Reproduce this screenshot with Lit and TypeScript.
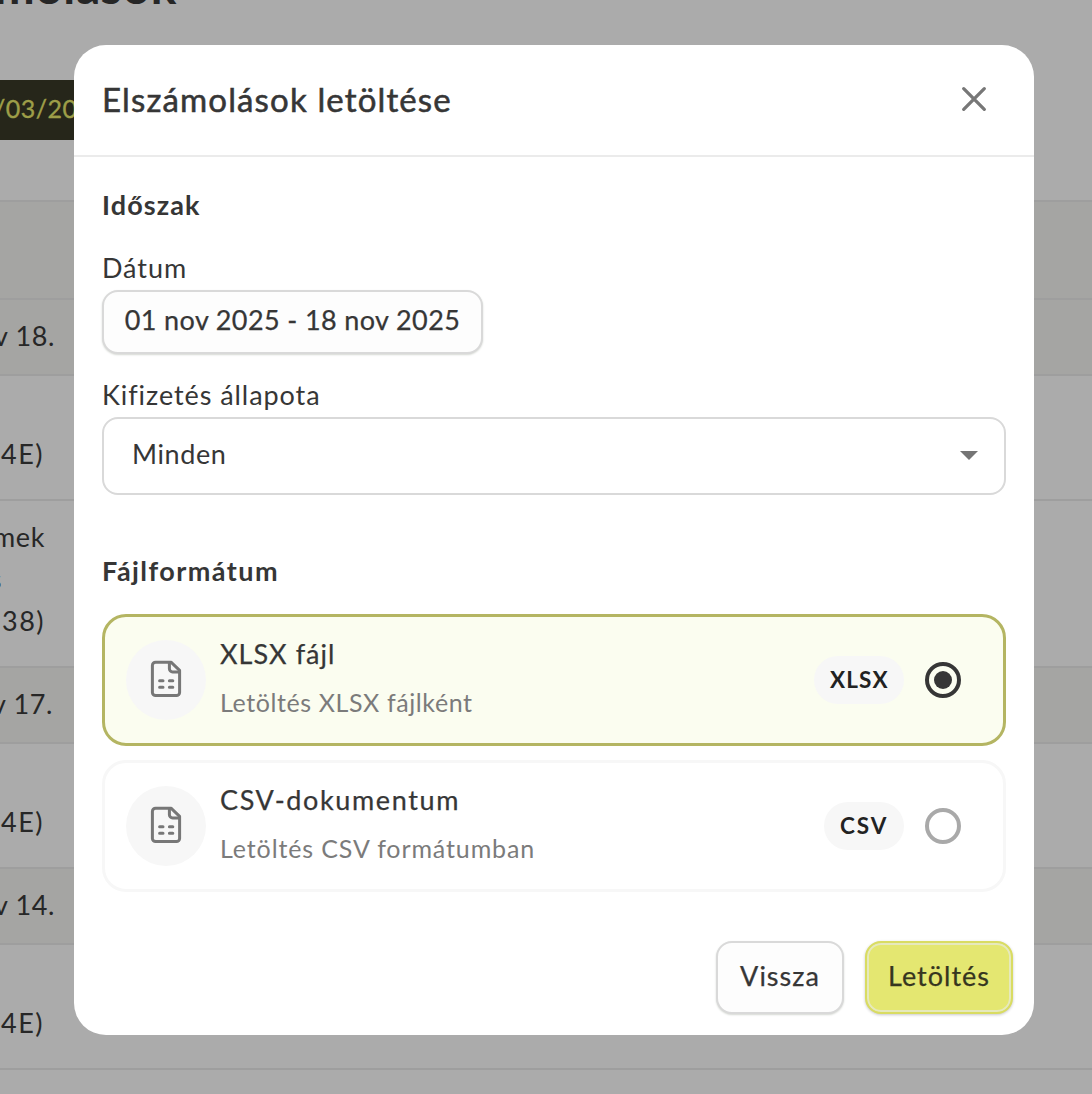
import { LitElement, html, css, svg } from "lit";
import { customElement, property } from "lit/decorators.js";

interface Line { text: string; right: number; wide?: boolean; }
interface Row { height: number; shaded?: boolean; lines: Line[]; }

const ROWS: Row[] = [
  { height: 98, shaded: true, lines: [] },
  { height: 76, shaded: true, lines: [{ text: "nov 18.", right: 55 }] },
  { height: 125, lines: [{ text: "", right: 0 }, { text: "4E)", right: 44, wide: true }] },
  { height: 167, lines: [{ text: "termek", right: 45 }, { text: "és", right: 2 }, { text: "38)", right: 45, wide: true }] },
  { height: 76, shaded: true, lines: [{ text: "nov 17.", right: 53 }] },
  { height: 125, lines: [{ text: "", right: 0 }, { text: "4E)", right: 44, wide: true }] },
  { height: 76, shaded: true, lines: [{ text: "nov 14.", right: 55 }] },
  { height: 125, lines: [{ text: "", right: 0 }, { text: "4E)", right: 44, wide: true }] },
  { height: 26, lines: [] },
];

@customElement("statement-page")
export class StatementPage extends LitElement {
  static styles = css`
    :host { display: block; height: 1094px; overflow: hidden; background: #ababab; color: #272727; }
    .top { height: 80px; overflow: hidden; }
    .heading { width: 177px; margin-top: -44px; display: flex; justify-content: flex-end;
      font-size: 48px; line-height: 60px; font-weight: 700; color: #262626; letter-spacing: 0.6px; }
    .band { height: 60px; width: 300px; background: #26261a; color: #9d9e48; display: flex; align-items: center; overflow: hidden; }
    .range { font-size: 25px; line-height: 30px; letter-spacing: 0.5px; -webkit-text-stroke: 0.35px currentColor; margin: -5px 0 0 -6px; white-space: nowrap; }
    .gap { height: 60px; }
    .row { box-sizing: border-box; border-top: 2px solid #9e9e9e; padding-top: 15px; overflow: hidden; }
    .shaded { background: #a5a5a3; }
    .line { height: 42px; line-height: 42px; font-size: 27px; display: flex; justify-content: flex-end; white-space: nowrap; letter-spacing: 0.6px; }
    .wide { letter-spacing: 1.5px; }
  `;
  render() {
    return html`
      <div class="top"><div class="heading">Elszámolások</div></div>
      <div class="band"><div class="range">/03/20</div></div>
      <div class="gap"></div>
      ${ROWS.map((r) => html`
        <div class="row ${r.shaded ? "shaded" : ""}" style="height:${r.height}px">
          ${r.lines.map((l) => html`<div class="line ${l.wide ? "wide" : ""}" style="width:${l.right}px">${l.text}</div>`)}
        </div>`)}
    `;
  }
}

@customElement("format-option")
export class FormatOption extends LitElement {
  @property() name = "";
  @property() detail = "";
  @property() badge = "";
  @property({ type: Boolean, reflect: true }) selected = false;
  static styles = css`
    :host { box-sizing: border-box; display: flex; align-items: center; height: 132px; padding: 0 42px 0 21px;
      border: 3px solid #f7f7f7; border-radius: 24px; background: #fff; }
    :host([selected]) { border-color: #b4b562; background: #fbfdf0; }
    .disc { width: 80px; height: 80px; border-radius: 50%; background: #f7f7f7; display: grid; place-items: center; }
    .disc svg { width: 40px; height: 40px; display: block; }
    .texts { flex: 1; padding: 0 0 4px 14px; }
    .name { font-size: 27px; line-height: 48px; -webkit-text-stroke: 0.25px currentColor; color: #363636; letter-spacing: var(--name-spacing); }
    .detail { font-size: 25px; line-height: 49px; color: #7b7b7b; letter-spacing: var(--detail-spacing); }
    .badge { box-sizing: border-box; width: var(--badge-width); height: 48px; border-radius: 24px; padding-left: 16px; background: #f7f7f7; font-size: 22.5px; line-height: 47px; font-weight: 700; color: #222; letter-spacing: var(--badge-spacing); white-space: nowrap; }
    .radio { box-sizing: border-box; width: 36px; height: 36px; margin-left: 21px; border: 4px solid #a9a9a9; border-radius: 50%; display: grid; place-items: center; }
    :host([selected]) .radio { border-color: #363636; }
    .dot { width: 18px; height: 18px; border-radius: 50%; background: #363636; }
  `;
  render() {
    return html`
      <div class="disc">
        <svg viewBox="0 0 40 40" fill="none" stroke="#777" stroke-width="3" stroke-linecap="round" stroke-linejoin="round">
          ${svg`<path d="M25 2.2H9.6a3.2 3.2 0 0 0-3.2 3.2v27a3.2 3.2 0 0 0 3.2 3.2h20.8a3.2 3.2 0 0 0 3.2-3.2V10.4Z"/>
          <path d="M23.4 2.4v6.4a3.2 3.2 0 0 0 3.2 3.2h6.6"/>
          <path d="M13.6 20.7h3.4M23.4 20.7h3.4M13.6 27.3h3.4M23.4 27.3h3.4"/>`}
        </svg>
      </div>
      <div class="texts">
        <div class="name">${this.name}</div>
        <div class="detail">${this.detail}</div>
      </div>
      <div class="badge">${this.badge}</div>
      <div class="radio">${this.selected ? html`<div class="dot"></div>` : ""}</div>
    `;
  }
}

@customElement("app-root")
export class AppRoot extends LitElement {
  static styles = css`
    :host { display: block; position: relative; width: 1092px; height: 1094px; overflow: hidden; font-family: Lato, "Liberation Sans", sans-serif; }
    .modal { position: absolute; left: 74px; top: 45px; width: 960px; height: 990px; box-sizing: border-box; border-radius: 32px; background: #fff; color: #363636;
      display: flex; flex-direction: column; overflow: hidden; }
    .head { height: 110px; flex: none; border-bottom: 2px solid #ebebeb; padding: 0 44px 0 28px; display: flex; align-items: center; justify-content: space-between; }
    .title { font-size: 33px; line-height: 40px; margin-top: -2px; -webkit-text-stroke: 0.55px currentColor; letter-spacing: 1.14px; }
    .close { width: 32px; height: 32px; display: block; }
    .body { flex: 1; padding: 0 28px; display: flex; flex-direction: column; }
    .section { font-size: 27px; line-height: 34px; font-weight: 700; margin-top: 31px; letter-spacing: 1.1px; }
    .label { font-size: 27px; line-height: 34px; letter-spacing: 0.93px; }
    .label.date { margin-top: 29px; }
    .label.state { margin-top: 24px; }
    .picker { box-sizing: border-box; align-self: flex-start; width: 381px; height: 64px; margin-top: 5px; border: 2px solid #d9d9d9; border-radius: 16px; background: #fdfdfd;
      box-shadow: 0 1px 2px #d5d8d3; display: flex; justify-content: center; font-size: 27px; line-height: 55px; letter-spacing: 0.38px; -webkit-text-stroke: 0.25px currentColor; white-space: nowrap; }
    .select { box-sizing: border-box; height: 78px; margin-top: 5px; border: 2px solid #d9d9d9; border-radius: 16px; padding: 0 26px 2px 28px; display: flex; align-items: center; justify-content: space-between; font-size: 27px; letter-spacing: 0.6px; }
    .value { line-height: 34px; margin-top: -3px; }
    .caret { width: 18px; height: 9px; display: block; }
    .section.format { margin-top: 59px; letter-spacing: 1.45px; }
    .options { display: grid; gap: 14px; margin-top: 26px; }
    .xlsx { --name-spacing: 1.05px; --detail-spacing: 0.6px; --badge-width: 90px; --badge-spacing: 1.1px; }
    .csv { --name-spacing: 1.62px; --detail-spacing: 0.88px; --badge-width: 80px; --badge-spacing: 1.9px; }
    .foot { display: flex; justify-content: flex-end; gap: 21px; padding: 0 21px 21px; }
    .btn { box-sizing: border-box; height: 73px; border: 2px solid #d9d9d9; border-radius: 16px; background: #fdfdfd; box-shadow: 0 1px 2px #d5d8d3; display: flex; justify-content: center; font-size: 27px; line-height: 66px; letter-spacing: 1px; -webkit-text-stroke: 0.25px currentColor; }
    .back { width: 128px; }
    .go { width: 148px; background: #e4e771; border-color: #d9dc62; color: #36361f; box-shadow: inset 0 0 0 2px #e6e9bd, 0 1px 3px #c9c9c9; }
  `;
  render() {
    return html`
      <statement-page></statement-page>
      <div class="modal" role="dialog">
        <div class="head">
          <div class="title">Elszámolások letöltése</div>
          <svg class="close" viewBox="0 0 32 32" fill="none" stroke="#777" stroke-width="3.3" stroke-linecap="round"><path d="M5.7 4.7l20.6 20.6M26.3 4.7L5.7 25.3"/></svg>
        </div>
        <div class="body">
          <div class="section">Időszak</div>
          <div class="label date">Dátum</div>
          <div class="picker">01 nov 2025 - 18 nov 2025</div>
          <div class="label state">Kifizetés állapota</div>
          <div class="select"><span class="value">Minden</span><svg class="caret" viewBox="0 0 18 9"><path d="M0 0h18L9 9z" fill="#757575"/></svg></div>
          <div class="section format">Fájlformátum</div>
          <div class="options">
            <format-option class="xlsx" selected name="XLSX fájl" detail="Letöltés XLSX fájlként" badge="XLSX"></format-option>
            <format-option class="csv" name="CSV-dokumentum" detail="Letöltés CSV formátumban" badge="CSV"></format-option>
          </div>
        </div>
        <div class="foot">
          <div class="btn back">Vissza</div>
          <div class="btn go">Letöltés</div>
        </div>
      </div>
    `;
  }
}
